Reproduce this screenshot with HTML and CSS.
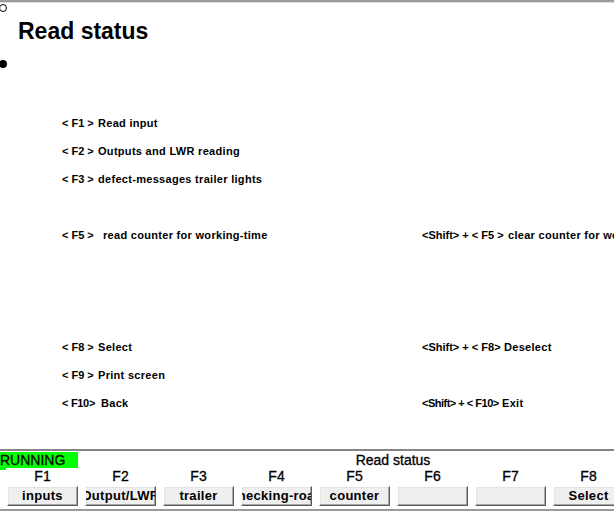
FILE: index.html
```html
<!DOCTYPE html>
<html>
<head>
<meta charset="utf-8">
<link rel="stylesheet" href="styles.css">
</head>
<body>
<div class="screen">
  <div class="top-rule"></div>
  <main class="main">
    <div class="marker-ring"></div>
    <h1 class="title">Read status</h1>
    <div class="marker-dot"></div>
    <div class="menu">
      <div class="cell"><span class="key">&lt; F1 &gt;</span>Read input</div><div class="cell"></div>
      <div class="cell"><span class="key">&lt; F2 &gt;</span>Outputs and LWR reading</div><div class="cell"></div>
      <div class="cell"><span class="key">&lt; F3 &gt;</span>defect-messages trailer lights</div><div class="cell"></div>
      <div class="cell"></div><div class="cell"></div>
      <div class="cell"><span class="key key-wide">&lt; F5 &gt;</span>read counter for working-time</div><div class="cell"><span class="skey skey-f5">&lt;Shift&gt; + &lt; F5 &gt;</span>clear counter for working-time</div>
      <div class="cell"></div><div class="cell"></div>
      <div class="cell"></div><div class="cell"></div>
      <div class="cell"></div><div class="cell"></div>
      <div class="cell"><span class="key">&lt; F8 &gt;</span>Select</div><div class="cell"><span class="skey skey-f8">&lt;Shift&gt; + &lt; F8&gt;</span>Deselect</div>
      <div class="cell"><span class="key">&lt; F9 &gt;</span>Print screen</div><div class="cell"></div>
      <div class="cell"><span class="key key-mid">&lt; F10&gt;</span>Back</div><div class="cell"><span class="skey skey-f10">&lt;Shift&gt; + &lt; F10&gt;</span>Exit</div>
    </div>
  </main>
  <footer class="panel">
    <div class="status-row">
      <div class="running">RUNNING</div>
      <div class="panel-title">Read status</div>
    </div>
    <div class="keys">
      <div class="fkey">F1</div>
      <div class="fkey">F2</div>
      <div class="fkey">F3</div>
      <div class="fkey">F4</div>
      <div class="fkey">F5</div>
      <div class="fkey">F6</div>
      <div class="fkey">F7</div>
      <div class="fkey">F8</div>
    </div>
    <div class="keys buttons">
      <div class="btn"><span>inputs</span></div>
      <div class="btn"><span>Output/LWR</span></div>
      <div class="btn"><span>trailer</span></div>
      <div class="btn"><span>checking-road</span></div>
      <div class="btn"><span>counter</span></div>
      <div class="btn"><span></span></div>
      <div class="btn"><span></span></div>
      <div class="btn"><span>Select</span></div>
    </div>
  </footer>
</div>
</body>
</html>
```
FILE: styles.css
```css
html, body {
  margin: 0;
  padding: 0;
  background: #ffffff;
}
body {
  width: 614px;
  height: 513px;
  overflow: hidden;
  font-family: "Liberation Sans", Arial, sans-serif;
  color: #000;
}
.screen {
  width: 614px;
  height: 513px;
  overflow: hidden;
  display: flex;
  flex-direction: column;
}
.top-rule {
  height: 1px;
  border-top: 2px solid #9c9c9c;
  background: #dadada;
  flex: none;
}
.main {
  height: 446px;
  flex: none;
  display: flex;
  flex-direction: column;
  align-items: flex-start;
}
.marker-ring {
  width: 6px;
  height: 6px;
  border: 1px solid #000;
  border-radius: 50%;
  margin-top: 1px;
  margin-left: -1px;
}
.title {
  margin: 5px 0 0 18px;
  font-size: 23px;
  line-height: 28px;
  font-weight: bold;
}
.marker-dot {
  width: 8px;
  height: 8px;
  background: #000;
  border-radius: 50%;
  margin-top: 15px;
  margin-left: -1px;
}
.menu {
  margin-top: 41px;
  padding-left: 62px;
  display: grid;
  grid-template-columns: 360px 300px;
  grid-auto-rows: 28px;
  font-size: 11px;
  font-weight: bold;
  letter-spacing: 0.3px;
}
.cell {
  line-height: 28px;
  white-space: nowrap;
  overflow: hidden;
}
.key {
  display: inline-block;
  width: 36px;
  letter-spacing: 0;
}
.key-wide {
  width: 41px;
}
.key-mid {
  width: 39px;
  letter-spacing: -0.3px;
}
.skey {
  display: inline-block;
  letter-spacing: 0;
}
.skey-f5 {
  width: 86px;
}
.skey-f8 {
  width: 82px;
}
.skey-f10 {
  width: 80px;
  letter-spacing: -0.5px;
}
.panel {
  flex: none;
  border-top: 2px solid #858585;
  border-bottom: 2px solid #9a9a9a;
  padding-bottom: 3px;
  font-size: 14px;
}
.status-row {
  height: 17px;
  display: flex;
  align-items: flex-end;
}
.running {
  position: relative;
  width: 78px;
  height: 16px;
  line-height: 16px;
  background: #00ff00;
  flex: none;
  -webkit-text-stroke: 0.3px #000;
}
.running::after {
  content: "";
  position: absolute;
  left: 0;
  top: 16px;
  width: 6px;
  height: 2px;
  background: #00ff00;
}
.panel-title {
  flex: 1;
  text-align: center;
  padding-left: 94px;
  line-height: 16px;
  height: 16px;
  white-space: nowrap;
  -webkit-text-stroke: 0.3px #000;
}
.keys {
  display: flex;
  gap: 7px;
  padding-left: 7px;
  height: 16px;
  line-height: 16px;
}
.fkey {
  width: 71px;
  flex: none;
  text-align: center;
  -webkit-text-stroke: 0.3px #000;
}
.buttons {
  height: 20px;
  margin-top: 2px;
}
.btn {
  width: 71px;
  height: 20px;
  box-sizing: border-box;
  flex: none;
  display: flex;
  justify-content: center;
  align-items: center;
  overflow: hidden;
  background: #efefef;
  border-top: 1px solid #ffffff;
  border-left: 1px solid #ffffff;
  border-right: 1px solid #5a5a5a;
  border-bottom: 1px solid #5a5a5a;
  box-shadow: inset -1px -1px 0 #a8a8a8, inset 1px 1px 0 #e4e4e4;
  font-size: 13px;
  font-weight: bold;
  letter-spacing: 0.3px;
  white-space: nowrap;
}
.btn span {
  flex: none;
}
```
